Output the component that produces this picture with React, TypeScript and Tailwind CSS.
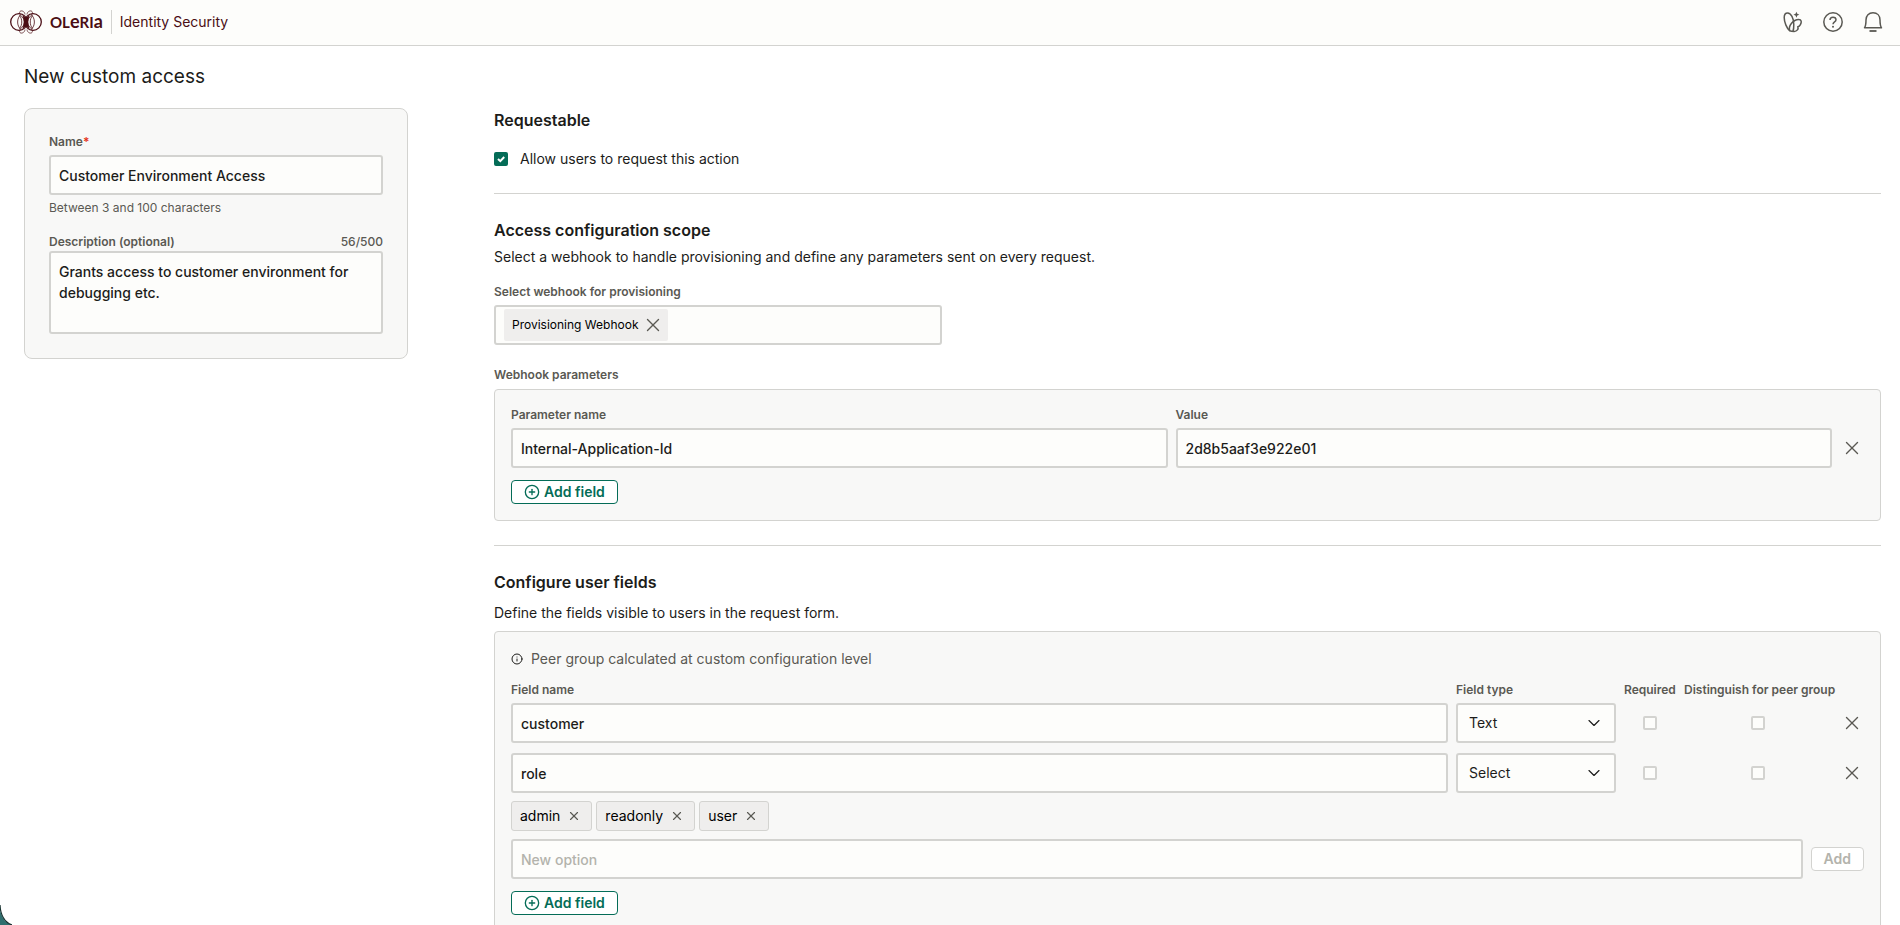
import React, { useState } from 'react';
import { X, ChevronDown, CirclePlus, Info } from 'lucide-react';

interface UserField {
  id: string;
  name: string;
  type: 'Text' | 'Select';
  required: boolean;
  distinguish: boolean;
}

const inputClass =
  'w-full h-10 px-2 rounded-[3px] border-2 border-[#d3d3d0] bg-[#fdfdfb] text-sm font-medium text-[#1c1c1a] placeholder:text-[#b3b3ac] focus:outline-none focus:border-[#046c57]';
const labelClass = 'text-xs leading-[18px] font-semibold text-[#5a5953]';
const panelClass = 'rounded border border-[#d3d3d0] bg-[#f8f8f7] px-4';

const BrandMark = () => (
  <svg width="32" height="24" viewBox="0 0 32 24" fill="none" stroke="#4a0d14" aria-hidden="true">
    <circle cx="9" cy="12" r="8.3" strokeWidth="1.3" />
    <circle cx="23" cy="12" r="8.3" strokeWidth="1.3" />
    <path d="M11 4.5C6.500 8 6.500 16 11 19.500M9.500 5.500C12.500 9 12.500 15 9.500 18.500" strokeWidth="0.8" />
    <path d="M21 4.5C25.500 8 25.500 16 21 19.500M22.500 5.500C19.500 9 19.500 15 22.500 18.500" strokeWidth="0.8" />
    <path d="M16 12C14 8 9.5 5.5 9.6 2.4C9.8 0 14.5 0.3 15 4.5" strokeWidth="0.7" />
    <path d="M16 12C18 8 22.5 5.5 22.4 2.4C22.2 0 17.5 0.3 17 4.5" strokeWidth="0.7" />
    <path d="M16 12C14 16 9.5 18.5 9.6 21.6C9.8 24 14.5 23.7 15 19.5" strokeWidth="0.7" />
    <path d="M16 12C18 16 22.5 18.5 22.4 21.6C22.2 24 17.5 23.7 17 19.5" strokeWidth="0.7" />
    <path d="M12.8 5.5L15.4 7.5H16.6L19.2 5.5L18 12L19.2 18.5L16.6 16.5H15.4L12.8 18.5L14 12Z" fill="#4a0d14" strokeWidth="0.5" />
  </svg>
);

const ButterflyIcon = () => (
  <svg width="20" height="22" viewBox="0 0 20 22" fill="none" stroke="currentColor" strokeWidth="1.5" strokeLinejoin="round" aria-hidden="true">
    <path d="M6.8 19.8C3.6 17.2 1.2 11 1.2 6.6C1.2 3.4 2.6 1.9 4.6 1.9C8 1.9 10.8 7.5 10.8 13.5C10.8 16 10.6 18.500 10 20.3" />
    <path d="M6.8 19.8C4.800 15 10.500 8.400 15.6 8.400C18.800 8.400 18.700 11.2 17.400 13.600C16.700 14.900 15.700 15.500 14.8 15.700C15.8 18 14 20.4 11.2 20.4C9.200 20.4 7.900 20.3 6.8 19.8Z" />
    <path d="M13.4 0.7L14.3 2.8L16.4 3.700L14.3 4.6L13.4 6.700L12.5 4.6L10.4 3.700L12.5 2.8Z" fill="currentColor" stroke="none" />
  </svg>
);

const HelpIcon = () => (
  <svg width="20" height="20" viewBox="0 0 20 20" fill="none" stroke="currentColor" strokeWidth="1.5" aria-hidden="true">
    <circle cx="10" cy="10" r="9.2" />
    <path d="M7 8C7 6.2 8.3 5.2 10 5.2C11.7 5.2 13 6.2 13 7.8C13 9.9 10 9.9 10 12.2" />
    <circle cx="10" cy="14.7" r="1" fill="currentColor" stroke="none" />
  </svg>
);

const BellIcon = () => (
  <svg width="20" height="22" viewBox="0 0 20 22" fill="none" stroke="currentColor" strokeWidth="1.5" strokeLinejoin="round" aria-hidden="true">
    <path d="M1.5 16.8C2.7 15 3 13 3 9C3 4.5 5.8 1.8 10 1.8C14.2 1.8 17 4.5 17 9C17 13 17.3 15 18.5 16.8Z" />
    <path d="M6.5 20H13.5" strokeWidth="1.8" />
  </svg>
);

const RemoveButton: React.FC<{ label: string; onClick?: () => void; size?: number }> = ({ label, onClick, size = 22 }) => (
  <button type="button" aria-label={label} onClick={onClick} className="flex items-center justify-center text-[#5a5953]">
    <X size={size} strokeWidth={size > 16 ? 1.5 : 2} />
  </button>
);

const AddFieldButton: React.FC<{ onClick?: () => void }> = ({ onClick }) => (
  <button
    type="button"
    onClick={onClick}
    className="flex h-6 items-center gap-1 rounded border border-[#046c57] bg-white px-3 text-sm font-semibold text-[#046c57]"
  >
    <CirclePlus size={16} strokeWidth={2} />
    Add field
  </button>
);

const CheckBox: React.FC<{ label: string; checked: boolean; onChange: () => void }> = ({ label, checked, onChange }) => (
  <input
    type="checkbox"
    aria-label={label}
    checked={checked}
    onChange={onChange}
    className="size-[14px] appearance-none justify-self-center rounded-[2px] border-2 border-[#d3d3d0] bg-[#fdfdfb] checked:border-[#046c57] checked:bg-[#046c57]"
  />
);

const Header = () => (
  <header className="flex h-[46px] shrink-0 items-center border-b border-[#d3d3d0] bg-[#fdfdfb] pr-[17px] pb-px pl-[10px]">
    <BrandMark />
    <span className="ml-2 flex h-6 items-baseline font-['Lato',sans-serif] text-[15px] leading-[22px] font-bold text-[#4a0d14]">
      OL<span className="text-[18px]">e</span>RI<span className="text-[18px]">a</span>
    </span>
    <span className="mx-2 h-6 w-px bg-[#d3d3d0]" />
    <span className="text-sm text-[#4a0d14]">Identity Security</span>
    <div className="ml-auto flex items-center gap-5 text-[#5a5953]">
      <button type="button" aria-label="Assistant"><ButterflyIcon /></button>
      <button type="button" aria-label="Help"><HelpIcon /></button>
      <button type="button" aria-label="Notifications"><BellIcon /></button>
    </div>
  </header>
);

const DetailsCard = () => {
  const [name, setName] = useState('Customer Environment Access');
  const [description, setDescription] = useState('Grants access to customer environment for debugging etc.');

  return (
    <div className="flex flex-col rounded-lg border border-[#d3d3d0] bg-[#f8f8f7] p-6">
      <label htmlFor="name" className={labelClass}>
        Name<span className="text-[#e5341a]">*</span>
      </label>
      <input id="name" value={name} onChange={(e) => setName(e.target.value)} className={`mt-1 ${inputClass}`} />
      <p className="mt-1 text-xs leading-[18px] text-[#5a5953]">Between 3 and 100 characters</p>
      <div className="mt-4 flex justify-between">
        <label htmlFor="description" className={labelClass}>Description (optional)</label>
        <span className="text-xs leading-[18px] font-medium text-[#5a5953]">{description.length}/500</span>
      </div>
      <textarea
        id="description"
        value={description}
        onChange={(e) => setDescription(e.target.value)}
        className="h-[83px] w-full resize-none rounded-[3px] border-2 border-[#d3d3d0] bg-[#fdfdfb] px-2 py-2 text-sm leading-[21px] font-medium text-[#1c1c1a]"
      />
    </div>
  );
};

const WebhookSection = () => (
  <section className="border-b border-[#d3d3d0] pt-6 pb-6">
    <h2 className="text-base leading-6 font-semibold">Access configuration scope</h2>
    <p className="mt-1 text-sm leading-[22px]">
      Select a webhook to handle provisioning and define any parameters sent on every request.
    </p>
    <div className="mt-[15px] flex w-[448px] flex-col gap-1">
      <label htmlFor="webhook" className={labelClass}>Select webhook for provisioning</label>
      <div className="flex h-10 items-center rounded-[3px] border-2 border-[#d3d3d0] bg-[#fdfdfb] px-2">
        <span className="flex h-8 items-center gap-1 rounded-[2px] bg-[#efeeed] pr-1 pl-2 text-xs text-black">
          Provisioning Webhook
          <RemoveButton label="Remove Provisioning Webhook" />
        </span>
        <input id="webhook" className="min-w-0 flex-1 bg-transparent px-2 text-sm focus:outline-none" />
      </div>
    </div>
    <p className={`mt-[21px] ${labelClass}`}>Webhook parameters</p>
    <div className={`mt-[5px] pt-4 pb-4 ${panelClass}`}>
      <div className="grid grid-cols-[1fr_1fr_24px] gap-x-2 gap-y-1">
        <label htmlFor="param-name" className={labelClass}>Parameter name</label>
        <label htmlFor="param-value" className={labelClass}>Value</label>
        <span />
        <input id="param-name" defaultValue="Internal-Application-Id" className={inputClass} />
        <input id="param-value" defaultValue="2d8b5aaf3e922e01" className={inputClass} />
        <RemoveButton label="Remove parameter" />
      </div>
      <div className="mt-3 flex">
        <AddFieldButton />
      </div>
    </div>
  </section>
);

const UserFieldsSection = () => {
  const [fields, setFields] = useState<UserField[]>([
    { id: 'f1', name: 'customer', type: 'Text', required: false, distinguish: false },
    { id: 'f2', name: 'role', type: 'Select', required: false, distinguish: false },
  ]);
  const [options, setOptions] = useState(['admin', 'readonly', 'user']);
  const [newOption, setNewOption] = useState('');

  const updateField = (id: string, patch: Partial<UserField>) => {
    setFields(fields.map((f) => (f.id === id ? { ...f, ...patch } : f)));
  };

  const addOption = () => {
    setOptions([...options, newOption.trim()]);
    setNewOption('');
  };

  return (
    <section className="pt-6">
      <h2 className="text-base leading-6 font-semibold">Configure user fields</h2>
      <p className="mt-2 text-sm leading-[22px]">Define the fields visible to users in the request form.</p>
      <div className={`mt-[7px] pt-[15px] pb-6 ${panelClass}`}>
        <div className="flex items-center gap-2 text-sm leading-6 text-[#5a5953]">
          <Info size={12} strokeWidth={2} className="text-[#1c1c1a]" />
          Peer group calculated at custom configuration level
        </div>
        <div className="mt-[10px] grid grid-cols-[1fr_160px_52px_148px_24px] gap-x-2">
          <label htmlFor="name-f1" className={labelClass}>Field name</label>
          <label htmlFor="type-f1" className={labelClass}>Field type</label>
          <span className={labelClass}>Required</span>
          <span className={`whitespace-nowrap ${labelClass}`}>Distinguish for peer group</span>
        </div>
        <div className="mt-1 flex flex-col gap-[10px]">
          {fields.map((field) => (
            <div key={field.id} className="grid grid-cols-[1fr_160px_52px_148px_24px] items-center gap-x-2">
              <input
                id={`name-${field.id}`}
                aria-label="Field name"
                value={field.name}
                onChange={(e) => updateField(field.id, { name: e.target.value })}
                className={inputClass}
              />
              <div className="relative">
                <select
                  id={`type-${field.id}`}
                  aria-label="Field type"
                  value={field.type}
                  onChange={(e) => updateField(field.id, { type: e.target.value as UserField['type'] })}
                  className="h-10 w-full appearance-none rounded-[3px] border-2 border-[#d3d3d0] bg-[#fdfdfb] pr-8 pl-[11px] text-sm text-[#1c1c1a]"
                >
                  <option>Text</option>
                  <option>Select</option>
                </select>
                <ChevronDown size={20} strokeWidth={1.4} className="pointer-events-none absolute top-[10px] right-3 text-[#1c1c1a]" />
              </div>
              <CheckBox
                label="Required"
                checked={field.required}
                onChange={() => updateField(field.id, { required: !field.required })}
              />
              <CheckBox
                label="Distinguish for peer group"
                checked={field.distinguish}
                onChange={() => updateField(field.id, { distinguish: !field.distinguish })}
              />
              <RemoveButton
                label={`Remove ${field.name}`}
                onClick={() => setFields(fields.filter((f) => f.id !== field.id))}
              />
            </div>
          ))}
        </div>
        <div className="mt-2 flex gap-1">
          {options.map((option) => (
            <span
              key={option}
              className="flex h-[30px] items-center gap-[7px] rounded-[3px] border border-[#d3d3d0] bg-[#efeeed] pr-[10px] pl-2 text-sm text-black"
            >
              {option}
              <RemoveButton
                size={14}
                label={`Remove ${option}`}
                onClick={() => setOptions(options.filter((o) => o !== option))}
              />
            </span>
          ))}
        </div>
        <div className="mt-2 flex items-center gap-2">
          <input
            aria-label="New option"
            placeholder="New option"
            value={newOption}
            onChange={(e) => setNewOption(e.target.value)}
            className={inputClass}
          />
          <button
            type="button"
            disabled={!newOption.trim()}
            onClick={addOption}
            className="h-6 rounded border border-[#046c57] bg-white px-3 text-sm font-semibold text-[#046c57] disabled:border-[#d3d3d0] disabled:text-[#b3b3ac]"
          >
            Add
          </button>
        </div>
        <div className="mt-3 flex">
          <AddFieldButton />
        </div>
      </div>
    </section>
  );
};

export default function App() {
  const [requestable, setRequestable] = useState(true);

  return (
    <div className="flex h-screen flex-col bg-white font-['Inter',sans-serif] text-[#1c1c1a]">
      <Header />
      <main className="min-h-0 flex-1 overflow-y-auto pt-4 pr-[19px] pb-6 pl-6 [scrollbar-width:none]">
        <h1 className="text-[19px] leading-[30px]">New custom access</h1>
        <div className="mt-4 grid grid-cols-[384px_1fr] items-start gap-x-[86px]">
          <DetailsCard />
          <div>
            <section className="border-b border-[#d3d3d0] pb-[23px]">
              <h2 className="text-base leading-6 font-semibold">Requestable</h2>
              <label className="mt-4 flex items-center gap-3 text-sm leading-[22px]">
                <span className="relative flex">
                  <input
                    type="checkbox"
                    checked={requestable}
                    onChange={() => setRequestable(!requestable)}
                    className="size-[14px] appearance-none rounded-[2px] border-2 border-[#d3d3d0] checked:border-[#046c57] checked:bg-[#046c57]"
                  />
                  {requestable && (
                    <svg viewBox="0 0 14 14" className="pointer-events-none absolute inset-0" fill="none" stroke="white" strokeWidth="2" aria-hidden="true">
                      <path d="M4 7L6.3 9.2L10.2 5" />
                    </svg>
                  )}
                </span>
                Allow users to request this action
              </label>
            </section>
            <WebhookSection />
            <UserFieldsSection />
          </div>
        </div>
      </main>
      {/* rounded corner of the window with the desktop behind it */}
      <svg width="12" height="28" viewBox="0 0 12 28" className="pointer-events-none fixed bottom-0 left-0" aria-hidden="true">
        <path d="M0 12C1 19 4 25 12 28H0Z" fill="#2f6f6f" />
        <path d="M0 8C0.5 18 4 25 12 28" fill="none" stroke="#16302f" strokeWidth="1.2" />
      </svg>
    </div>
  );
}
